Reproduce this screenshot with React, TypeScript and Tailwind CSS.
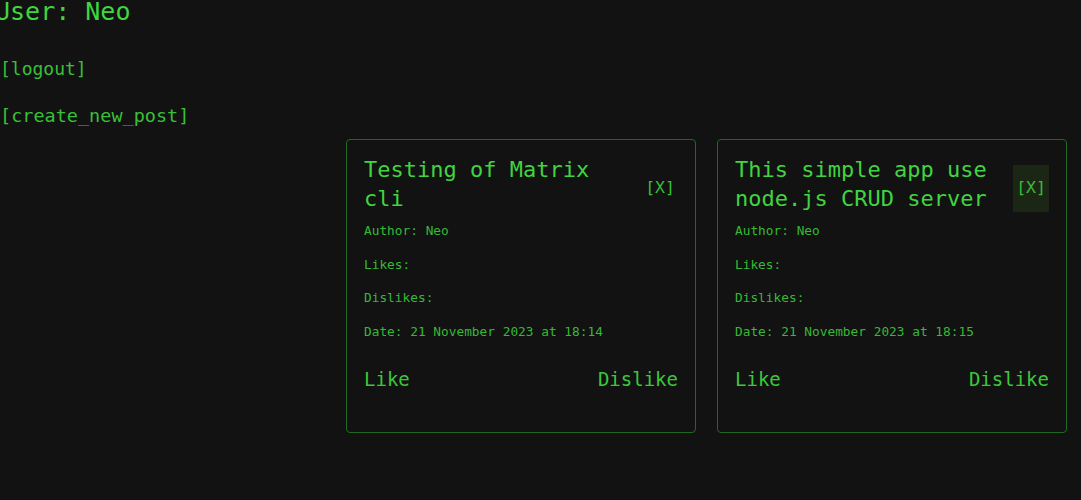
const mono = 'font-["DejaVu_Sans_Mono","Liberation_Mono",monospace]';

type Post = {
  title: string;
  author: string;
  date: string;
  hovered?: boolean;
};

const posts: Post[] = [
  { title: 'Testing of Matrix cli', author: 'Neo', date: '21 November 2023 at 18:14' },
  { title: 'This simple app use node.js CRUD server', author: 'Neo', date: '21 November 2023 at 18:15', hovered: true },
];

function PostCard({ post }: { post: Post }) {
  return (
    <div className="w-[350px] h-[294px] rounded-[4px] border border-[#1f6a1f] px-[17px] pt-[15px]">
      {/* header */}
      <div className="flex items-center justify-between">
        <h2 className="w-[262px] text-[22px] leading-[29px] text-[#40d440]">{post.title}</h2>
        <button
          className={
            'mt-[8px] h-[47px] px-[3px] text-[16.5px] text-[#38bc38] ' +
            (post.hovered ? 'bg-[#1c2614]' : '')
          }
        >
          [X]
        </button>
      </div>

      <div className="mt-[8px] flex flex-col gap-[13.5px] text-[12.8px] leading-[20px] text-[#36b936]">
        <p>Author: {post.author}</p>
        <p>Likes:</p>
        <p>Dislikes:</p>
        <p>Date: {post.date}</p>
      </div>

      <div className="mt-[24px] flex justify-between text-[19px] leading-[26px] text-[#3ac83a]">
        <button>Like</button>
        <button>Dislike</button>
      </div>
    </div>
  );
}

export default function App() {
  return (
    <div className={`min-h-[500px] w-[1081px] overflow-hidden bg-[#121212] ${mono}`}>
      <h1 className="-ml-[5px] text-[25px] leading-[24px] text-[#40d440]">User: Neo</h1>

      <div className="mt-[33px] text-[18px] leading-[24px] text-[#38c038]">
        <button>[logout]</button>
      </div>
      <div className="mt-[23px] text-[18.5px] leading-[24px] text-[#38c038]">
        <button>[create_new_post]</button>
      </div>

      <div className="mt-[11px] flex justify-end gap-[21px] pr-[14px]">
        {posts.map((p) => (
          <PostCard key={p.title} post={p} />
        ))}
      </div>
    </div>
  );
}
